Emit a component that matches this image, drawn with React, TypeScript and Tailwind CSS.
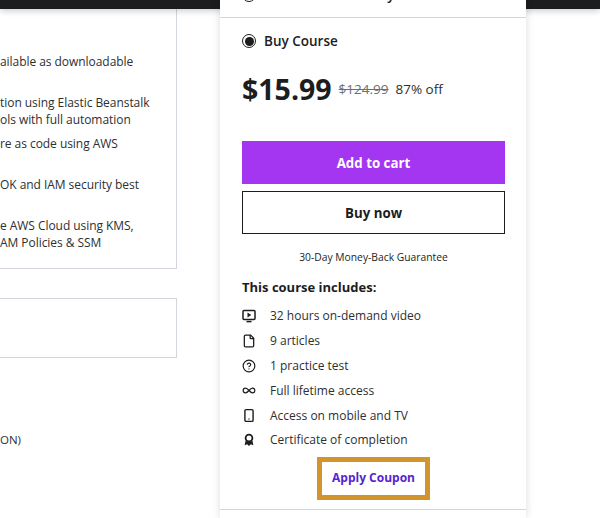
import { File, CircleHelp, Infinity as InfinityIcon, Smartphone } from 'lucide-react';

const leftLines = [
    { text: 'ailable as downloadable', className: 'mt-[52px]' },
    { text: 'tion using Elastic Beanstalk', className: 'mt-[24px]' },
    { text: 'ols with full automation', className: 'mt-0' },
    { text: 're as code using AWS', className: 'mt-[7px]' },
    { text: 'OK and IAM security best', className: 'mt-[24px]' },
    { text: 'e AWS Cloud using KMS,', className: 'mt-[24px]' },
    { text: 'AM Policies & SSM', className: 'mt-0' },
];

function VideoIcon() {
    return (
        <svg width="14" height="14" viewBox="0 0 14 14" fill="none">
            <rect x="1" y="1.5" width="12" height="9" rx="1" stroke="#1c1d1f" strokeWidth="1.5" />
            <path d="M5.5 3.6v4.8L9.3 6z" fill="#1c1d1f" />
            <path d="M4.5 12.6h5" stroke="#1c1d1f" strokeWidth="1.5" />
        </svg>
    );
}

function AwardIcon() {
    return (
        <svg width="14" height="14" viewBox="0 0 14 14" fill="none">
            <circle cx="7" cy="5" r="3.4" stroke="#1c1d1f" strokeWidth="1.8" />
            <path d="M3.6 7.5 2.6 12.2l2.5-.9L7 13l1.9-1.7 2.5.9-1-4.7A5 5 0 0 1 7 9a5 5 0 0 1-3.4-1.5z" fill="#1c1d1f" />
        </svg>
    );
}

const includes = [
    { icon: <VideoIcon />, label: '32 hours on-demand video' },
    { icon: <File size={14} color="#1c1d1f" strokeWidth={2.2} />, label: '9 articles' },
    { icon: <CircleHelp size={14} color="#1c1d1f" strokeWidth={2} />, label: '1 practice test' },
    { icon: <InfinityIcon size={15} color="#1c1d1f" strokeWidth={2} />, label: 'Full lifetime access' },
    { icon: <Smartphone size={15} color="#1c1d1f" strokeWidth={2.4} />, label: 'Access on mobile and TV' },
    { icon: <AwardIcon />, label: 'Certificate of completion' },
];

export default function App() {
    return (
        <div className="relative h-[518px] w-[600px] overflow-hidden bg-white font-['Open_Sans',sans-serif] text-[#1c1d1f]">
            {/* Top bar */}
            <div className="absolute inset-x-0 top-0 z-10 h-[9px] bg-[#1c1d1f] shadow-[0_2px_6px_rgba(0,0,0,0.2)]" />

            <div className="flex items-start">
                {/* Left column */}
                <div className="w-[177px] shrink-0">
                    <div className="h-[269px] overflow-hidden border-r border-b border-[#d1d7dc] pt-px text-[12px] leading-[17px] tracking-[-0.05px] text-[#2d2f31]">
                        {leftLines.map((line) => (
                            <div key={line.text} className={`whitespace-nowrap ${line.className}`}>
                                {line.text}
                            </div>
                        ))}
                    </div>
                    <div className="mt-[29px] h-[60px] border-y border-r border-[#d1d7dc]" />
                    <div className="mt-[73px] text-[11.5px] leading-[18px] text-[#2d2f31]">ON)</div>
                </div>

                {/* Purchase card */}
                <div className="relative z-20 ml-[43px] h-[518px] w-[306px] shrink-0 bg-white shadow-[0_0_8px_rgba(0,0,0,0.14)]">
                    <div className="flex h-[18px] items-end overflow-hidden border-b border-[#d1d7dc] pl-[22px]">
                        <div className="mb-[13px] flex shrink-0 items-center gap-2 whitespace-nowrap">
                            <span className="h-[14px] w-[14px] rounded-full border border-[#1c1d1f]" />
                            <span className="text-[13.5px] leading-[18px] font-semibold">Subscribe to Udemy</span>
                        </div>
                    </div>

                    <div className="px-[22px]">
                        <div className="mt-[14px] flex h-[18px] items-center gap-2">
                            <span className="flex h-[14px] w-[14px] items-center justify-center rounded-full border border-[#1c1d1f]">
                                <span className="h-[9px] w-[9px] rounded-full bg-[#1c1d1f]" />
                            </span>
                            <span className="text-[13.5px] leading-[18px] font-semibold">Buy Course</span>
                        </div>

                        <div className="mt-[18px] flex h-[42px] items-center whitespace-nowrap">
                            <span className="text-[28.5px] leading-[42px] font-bold">$15.99</span>
                            <span className="ml-[7px] text-[13.5px] text-[#6a6f73] line-through">$124.99</span>
                            <span className="ml-[7px] text-[13.5px] text-[#2d2f31]">87% off</span>
                        </div>

                        <button className="mt-[31px] flex h-[43px] w-[263px] items-center justify-center bg-[#a435f0] pt-[2px] text-[13.3px] font-bold text-white">
                            Add to cart
                        </button>
                        <button className="mt-[7px] flex h-[43px] w-[263px] items-center justify-center border border-[#1c1d1f] pt-[2px] text-[13.3px] font-bold">
                            Buy now
                        </button>

                        <div className="mt-[15px] w-[263px] text-center text-[10.3px] leading-[16px] text-[#1c1d1f]">
                            30-Day Money-Back Guarantee
                        </div>

                        <div className="mt-[12px] text-[13px] leading-[20px] font-bold">This course includes:</div>

                        <ul className="mt-[7px] flex flex-col">
                            {includes.map((item) => (
                                <li key={item.label} className="flex h-[24.8px] items-center text-[12px] text-[#2d2f31]">
                                    <span className="flex w-[14px] justify-center">{item.icon}</span>
                                    <span className="ml-[14px] whitespace-nowrap">{item.label}</span>
                                </li>
                            ))}
                        </ul>

                        <div className="mt-[4px] flex justify-center pl-[1px]">
                            <div className="flex h-[43px] w-[113px] items-center justify-center border-[5px] border-[#d3942c] text-[12px] font-bold text-[#5624d0]">
                                Apply Coupon
                            </div>
                        </div>
                    </div>

                    <div className="mt-[9px] border-t border-[#d1d7dc]" />
                </div>
            </div>
        </div>
    );
}
